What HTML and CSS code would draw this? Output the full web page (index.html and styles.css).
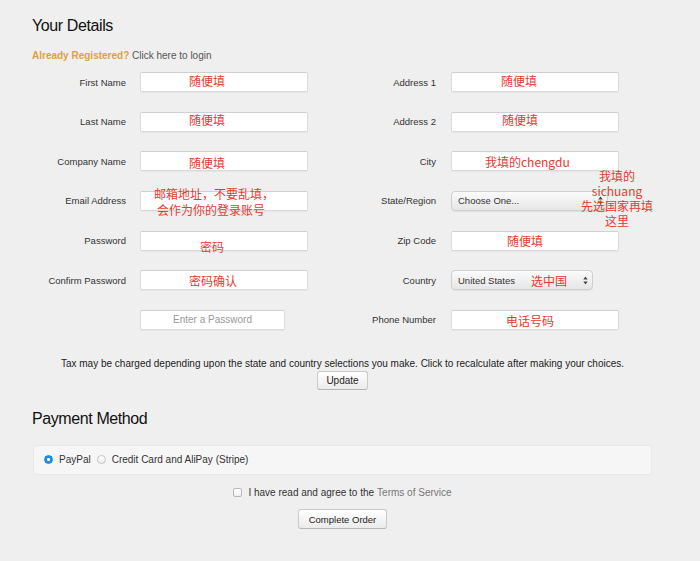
FILE: index.html
```html
<!DOCTYPE html>
<html lang="en">
<head>
<meta charset="utf-8">
<title>Your Details</title>
<link rel="stylesheet" href="styles.css">
</head>
<body>
<main class="page">
  <h2 class="section-title">Your Details</h2>
  <p class="login"><strong>Already Registered?</strong> Click here to login</p>

  <div class="form">
    <div class="col col-left">
      <div class="row"><label>First Name</label><div class="field"><input class="text" type="text"><span class="note n-first">随便填</span></div></div>
      <div class="row"><label>Last Name</label><div class="field"><input class="text" type="text"><span class="note n-last">随便填</span></div></div>
      <div class="row"><label>Company Name</label><div class="field"><input class="text" type="text"><span class="note n-company">随便填</span></div></div>
      <div class="row"><label>Email Address</label><div class="field"><input class="text" type="text"><span class="note n-email">邮箱地址，不要乱填，<br>会作为你的登录账号</span></div></div>
      <div class="row"><label>Password</label><div class="field"><input class="text" type="password"><span class="note n-pass">密码</span></div></div>
      <div class="row"><label>Confirm Password</label><div class="field"><input class="text" type="password"><span class="note n-confirm">密码确认</span></div></div>
      <div class="row"><span></span><div class="field"><input class="text short" type="text" placeholder="Enter a Password"></div></div>
    </div>
    <div class="col col-right">
      <div class="row"><label>Address 1</label><div class="field"><input class="text" type="text"><span class="note n-addr1">随便填</span></div></div>
      <div class="row"><label>Address 2</label><div class="field"><input class="text" type="text"><span class="note n-addr2">随便填</span></div></div>
      <div class="row"><label>City</label><div class="field"><input class="text" type="text"><span class="note n-city">我填的chengdu</span></div></div>
      <div class="row"><label>State/Region</label><div class="field">
        <div class="select state"><span>Choose One...</span>
          <svg class="arrows" width="5" height="9" viewBox="0 0 5 9"><path d="M2.5 0.5 L4.7 3.5 H0.3 Z M2.5 8.5 L4.7 5.5 H0.3 Z" fill="#444"/></svg>
        </div>
        <span class="note n-state">我填的<br>sichuang<br>先选国家再填<br>这里</span></div></div>
      <div class="row"><label>Zip Code</label><div class="field"><input class="text" type="text"><span class="note n-zip">随便填</span></div></div>
      <div class="row"><label>Country</label><div class="field">
        <div class="select country"><span>United States</span>
          <svg class="arrows" width="5" height="9" viewBox="0 0 5 9"><path d="M2.5 0.5 L4.7 3.5 H0.3 Z M2.5 8.5 L4.7 5.5 H0.3 Z" fill="#444"/></svg>
        </div>
        <span class="note n-country">选中国</span></div></div>
      <div class="row"><label>Phone Number</label><div class="field"><input class="text" type="text"><span class="note n-phone">电话号码</span></div></div>
    </div>
  </div>

  <p class="tax">Tax may be charged depending upon the state and country selections you make. Click to recalculate after making your choices.</p>
  <div class="center"><button class="btn btn-update" type="button">Update</button></div>

  <h2 class="section-title pay-title">Payment Method</h2>
  <div class="pay-panel">
    <label class="opt"><input class="radio" type="radio" name="pay" checked> PayPal</label>
    <label class="opt"><input class="radio" type="radio" name="pay"> Credit Card and AliPay (Stripe)</label>
  </div>

  <div class="terms"><label><input class="check" type="checkbox"> I have read and agree to the <span class="tos">Terms of Service</span></label></div>
  <div class="center order-wrap"><button class="btn btn-order" type="button">Complete Order</button></div>
</main>
</body>
</html>
```
FILE: styles.css
```css
* { box-sizing: border-box; }
html, body { margin: 0; background: #efefef; }
body { font-family: "Liberation Sans", Arial, sans-serif; color: #333; }

.page { width: 653px; padding: 14px 0 0 32px; }

.section-title {
  margin: 0;
  font-family: "Liberation Sans", Arial, sans-serif;
  font-weight: 400;
  font-size: 16px;
  letter-spacing: -0.4px;
  line-height: 24px;
  color: #111;
}

.login { margin: 11px 0 9px; font-size: 10px; line-height: 14px; color: #555; }
.login strong { color: #e0a040; }

.form { display: grid; grid-template-columns: 310px 311px; }
.col { display: flex; flex-direction: column; gap: 19.67px; }
.row { display: grid; grid-template-columns: 94px 168px; column-gap: 14px; align-items: center; height: 20px; }
.col-right .row { column-gap: 15px; }
.row label { text-align: right; font-size: 9.5px; color: #333; white-space: nowrap; }

.field { position: relative; height: 20px; }
.text {
  display: block;
  width: 168px; height: 20px;
  margin: 0; padding: 0 6px;
  background: #fff;
  border: 1px solid #dadada;
  border-top-color: #d0d0d0;
  border-radius: 2px;
  box-shadow: 0 1px 1px rgba(0,0,0,0.04);
  font-family: "Liberation Sans", Arial, sans-serif;
  font-size: 10px;
  outline: none;
}
.text.short { width: 145px; text-align: center; }
.text::placeholder { color: #999; }

.select {
  display: flex; align-items: center; justify-content: space-between;
  height: 20px; padding: 0 4px 0 6px;
  background: linear-gradient(#fbfbfb, #e6e6e6);
  border: 1px solid #cfcfcf;
  border-radius: 4px;
  box-shadow: 0 1px 1px rgba(0,0,0,0.06);
  font-size: 9.5px; color: #333;
}
.select.state { width: 157px; }
.select.country { width: 142px; }

.note {
  position: absolute;
  font-family: "Noto Sans CJK SC", "Liberation Sans", sans-serif;
  font-size: 12px;
  line-height: 14px;
  color: #e53a30;
  white-space: nowrap;
}
.n-first { left: 49px; top: 2px; }
.n-last { left: 49px; top: 1px; }
.n-company { left: 49px; top: 5px; }
.n-email { left: 14px; top: -5px; width: 114px; line-height: 16px; text-align: center; }
.n-pass { left: 60px; top: 9px; }
.n-confirm { left: 49px; top: 4px; }
.n-addr1 { left: 50px; top: 2px; }
.n-addr2 { left: 51px; top: 1px; }
.n-city { left: 34px; top: 4px; }
.n-state { left: 130px; top: -23px; width: 72px; line-height: 15px; text-align: center; }
.n-zip { left: 56px; top: 3px; }
.n-country { left: 80px; top: 4px; }
.n-phone { left: 55px; top: 4px; }

.tax { margin: 27px 0 0; font-size: 10px; line-height: 14px; color: #222; text-align: center; }
.center { display: flex; justify-content: center; }

.btn {
  margin: 0;
  height: 19px;
  padding: 0;
  background: linear-gradient(#ffffff, #ebebeb);
  border: 1px solid #cacaca;
  border-bottom-color: #b5b5b5;
  border-radius: 3px;
  font-family: "Liberation Sans", Arial, sans-serif;
  font-size: 9.5px;
  color: #222;
  white-space: nowrap;
}
.btn-update { width: 51px; font-size: 10px; }
.btn-order { width: 89px; height: 20px; }

.pay-title { margin-top: 17px; }

.pay-panel {
  display: flex; align-items: center; gap: 6px;
  margin: 14px 0 0 1px;
  width: 619px; height: 30px;
  padding-left: 10px;
  background: #f6f6f6;
  border: 1px solid #e9e9e9;
  border-radius: 3px;
  font-size: 10px; color: #333;
}
.opt { display: flex; align-items: center; gap: 6px; }
.radio {
  appearance: none; -webkit-appearance: none;
  margin: 0; width: 9px; height: 9px;
  border: 1px solid #c4c4c4; border-radius: 50%;
  background: linear-gradient(#fff, #eee);
}
.radio:checked {
  border-color: #1a7fd6;
  background: radial-gradient(circle, #fff 0 1.2px, #2190e8 1.8px);
}

.terms { margin-top: 11px; font-size: 10px; line-height: 14px; color: #333; text-align: center; }
.terms label { display: inline-flex; align-items: center; gap: 6px; }
.check {
  appearance: none; -webkit-appearance: none;
  margin: 0; width: 9px; height: 9px;
  border: 1px solid #b8b8b8; border-radius: 2px;
  background: linear-gradient(#fff, #f0f0f0);
}
.tos { color: #777; margin-left: -3px; }
.order-wrap { margin-top: 8px; }
```
